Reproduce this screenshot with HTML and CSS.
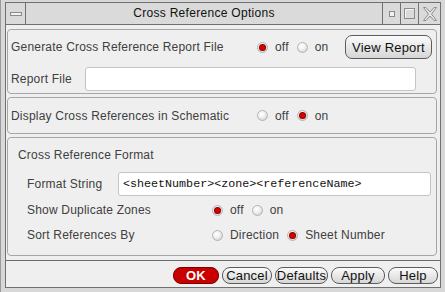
FILE: index.html
```html
<!DOCTYPE html>
<html>
<head>
    <title>Cross Reference Options</title>
    <link rel="stylesheet" href="styles.css">
</head>
<body>
    <div class="window">
        <div class="titlebar">
            <div class="tb-btn tb-menu"><span class="menu-bar"></span></div>
            <div class="tb-title">Cross Reference Options</div>
            <div class="tb-btn tb-min"><span class="min-box"></span></div>
            <div class="tb-btn tb-max"><span class="max-box"></span></div>
            <div class="tb-btn tb-close">
                <svg width="14" height="14" viewBox="0 0 14 14">
                    <polygon points="0.5,0.5 3,0.5 7,5 11,0.5 13.5,0.5 8.5,7 13.5,13.5 11,13.5 7,9 3,13.5 0.5,13.5 5.5,7" fill="#e6e6e6" stroke="#8c8c8c" stroke-width="1"/>
                </svg>
            </div>
        </div>
        <div class="client">
            <div class="group group-report">
                <div class="row row-top">
                    <span class="label label-main">Generate Cross Reference Report File</span>
                    <label class="choice"><span class="radio checked"></span>off</label>
                    <label class="choice"><span class="radio"></span>on</label>
                    <button class="btn view-btn">View Report</button>
                </div>
                <div class="row row-field">
                    <span class="label label-file">Report File</span>
                    <input class="field report-field" type="text">
                </div>
            </div>

            <div class="group group-display">
                <div class="row row-display">
                    <span class="label label-main">Display Cross References in Schematic</span>
                    <label class="choice"><span class="radio"></span>off</label>
                    <label class="choice"><span class="radio checked"></span>on</label>
                </div>
            </div>

            <div class="group group-format">
                <div class="group-title">Cross Reference Format</div>
                <div class="sub-rows">
                    <div class="row row-field">
                        <span class="label label-format">Format String</span>
                        <input class="field format-field" type="text" value="<sheetNumber><zone><referenceName>">
                    </div>
                    <div class="row row-opt row-dup">
                        <span class="label label-opt">Show Duplicate Zones</span>
                        <label class="choice"><span class="radio checked"></span>off</label>
                        <label class="choice"><span class="radio"></span>on</label>
                    </div>
                    <div class="row row-opt row-sort">
                        <span class="label label-opt">Sort References By</span>
                        <label class="choice"><span class="radio"></span>Direction</label>
                        <label class="choice"><span class="radio checked"></span>Sheet Number</label>
                    </div>
                </div>
            </div>

            <div class="footer">
                <button class="btn foot-btn ok-btn">OK</button>
                <button class="btn foot-btn cancel-btn">Cancel</button>
                <button class="btn foot-btn defaults-btn">Defaults</button>
                <button class="btn foot-btn apply-btn">Apply</button>
                <button class="btn foot-btn help-btn">Help</button>
            </div>
        </div>
    </div>
</body>
</html>
```

FILE: styles.css
```css
body {
    margin: 0;
    font-family: "Liberation Sans", Arial, sans-serif;
    font-size: 12px;
    letter-spacing: 0.2px;
    color: #404040;
}
.window {
    width: 445px;
    height: 292px;
    box-sizing: border-box;
    background: #d8d8d8;
    border-left: 1px solid #9a9a9a;
    padding: 2px 4px 4px 4px;
    display: flex;
    flex-direction: column;
}
.titlebar {
    display: flex;
    height: 23px;
    box-sizing: border-box;
    border: 1px solid #707070;
    background: #dadada;
}
.tb-btn {
    display: flex;
    align-items: center;
    justify-content: center;
    box-sizing: border-box;
}
.tb-menu {
    width: 20px;
    border-right: 1px solid #707070;
}
.menu-bar {
    width: 10px;
    height: 2px;
    border: 1px solid #8a8a8a;
    background: #f2f2f2;
}
.tb-title {
    flex: 1;
    text-align: center;
    line-height: 21px;
    color: #111;
    font-size: 12px;
    letter-spacing: 0.3px;
}
.tb-min,
.tb-max {
    width: 18px;
    border-left: 1px solid #707070;
}
.tb-close {
    width: 22px;
    border-left: 1px solid #707070;
}
.min-box {
    width: 4px;
    height: 4px;
    border: 1px solid #8a8a8a;
    background: #f2f2f2;
}
.max-box {
    width: 9px;
    height: 9px;
    border: 1px solid #8a8a8a;
    box-shadow: inset 1px 1px 0 #f4f4f4;
}
.client {
    flex: 1;
    display: flex;
    flex-direction: column;
    background: #efefef;
    border: 1px solid #707070;
    border-top: none;
}
.group {
    box-sizing: border-box;
    margin: 0 3px 3px 1px;
    border: 1px solid #a6a6a6;
    border-radius: 4px;
}
.group-report {
    margin-top: 4px;
    height: 65px;
    padding: 5px 4px 2px 3px;
}
.group-display {
    height: 37px;
    padding: 0 4px 0 3px;
}
.group-format {
    height: 119px;
    margin-bottom: 4px;
    padding: 10px 5px 10px 10px;
}
.row {
    display: flex;
    align-items: center;
}
.row-top {
    height: 24px;
    margin-bottom: 8px;
}
.row-field {
    height: 24px;
}
.row-display {
    height: 35px;
}
.label {
    flex: none;
}
.label-main {
    width: 246px;
}
.label-file {
    width: 74px;
}
.label-format {
    width: 91px;
}
.label-opt {
    width: 185px;
}
.choice {
    display: flex;
    align-items: center;
    gap: 7px;
    margin-right: 8px;
}
.radio {
    position: relative;
    width: 11px;
    height: 11px;
    box-sizing: border-box;
    border-radius: 50%;
    border: 1px solid #b4b4b4;
    background: radial-gradient(circle at 40% 35%, #ffffff 0, #f2f2f2 40%, #c4c4c4 100%);
}
.radio.checked::after {
    content: "";
    position: absolute;
    left: 2px;
    top: 2px;
    width: 5px;
    height: 5px;
    border-radius: 50%;
    background: #d80000;
    box-shadow: 0 0 0 1px #8a0000;
}
.btn {
    font-family: "Liberation Sans", Arial, sans-serif;
    font-size: 12px;
    letter-spacing: 0.2px;
    color: #111;
    padding: 0;
    box-sizing: border-box;
    border: 1px solid #5c5c5c;
    background: linear-gradient(#fbfbfb, #d6d6d6);
}
.view-btn {
    margin-left: auto;
    width: 87px;
    height: 24px;
    border-radius: 7px;
    font-size: 13px;
}
.field {
    box-sizing: border-box;
    height: 24px;
    border: 1px solid #c4c4c4;
    border-radius: 3px;
    background: #fff;
    padding: 0 4px;
    margin: 0;
}
.report-field {
    width: 331px;
}
.format-field {
    width: 313px;
    font-family: "Liberation Mono", "Courier New", monospace;
    font-size: 11.7px;
    letter-spacing: 0;
    color: #111;
}
.group-title {
    height: 14px;
    line-height: 14px;
    margin-bottom: 10px;
}
.sub-rows {
    padding-left: 9px;
}
.row-opt {
    height: 20px;
}
.row-dup {
    margin-top: 4px;
}
.row-sort {
    margin-top: 5px;
}
.footer {
    flex: 1;
    display: flex;
    justify-content: flex-end;
    gap: 3px;
    border-top: 1px solid #6a6a6a;
    padding: 6px 2px 0 0;
}
.foot-btn {
    height: 17px;
    border-radius: 8px;
    line-height: 15px;
    font-size: 13px;
}
.ok-btn {
    width: 46px;
    background: #c80000;
    border-color: #7a0000;
    color: #fff;
    font-weight: bold;
}
.cancel-btn {
    width: 50px;
}
.defaults-btn {
    width: 53px;
}
.apply-btn {
    width: 54px;
}
.help-btn {
    width: 50px;
}
```
